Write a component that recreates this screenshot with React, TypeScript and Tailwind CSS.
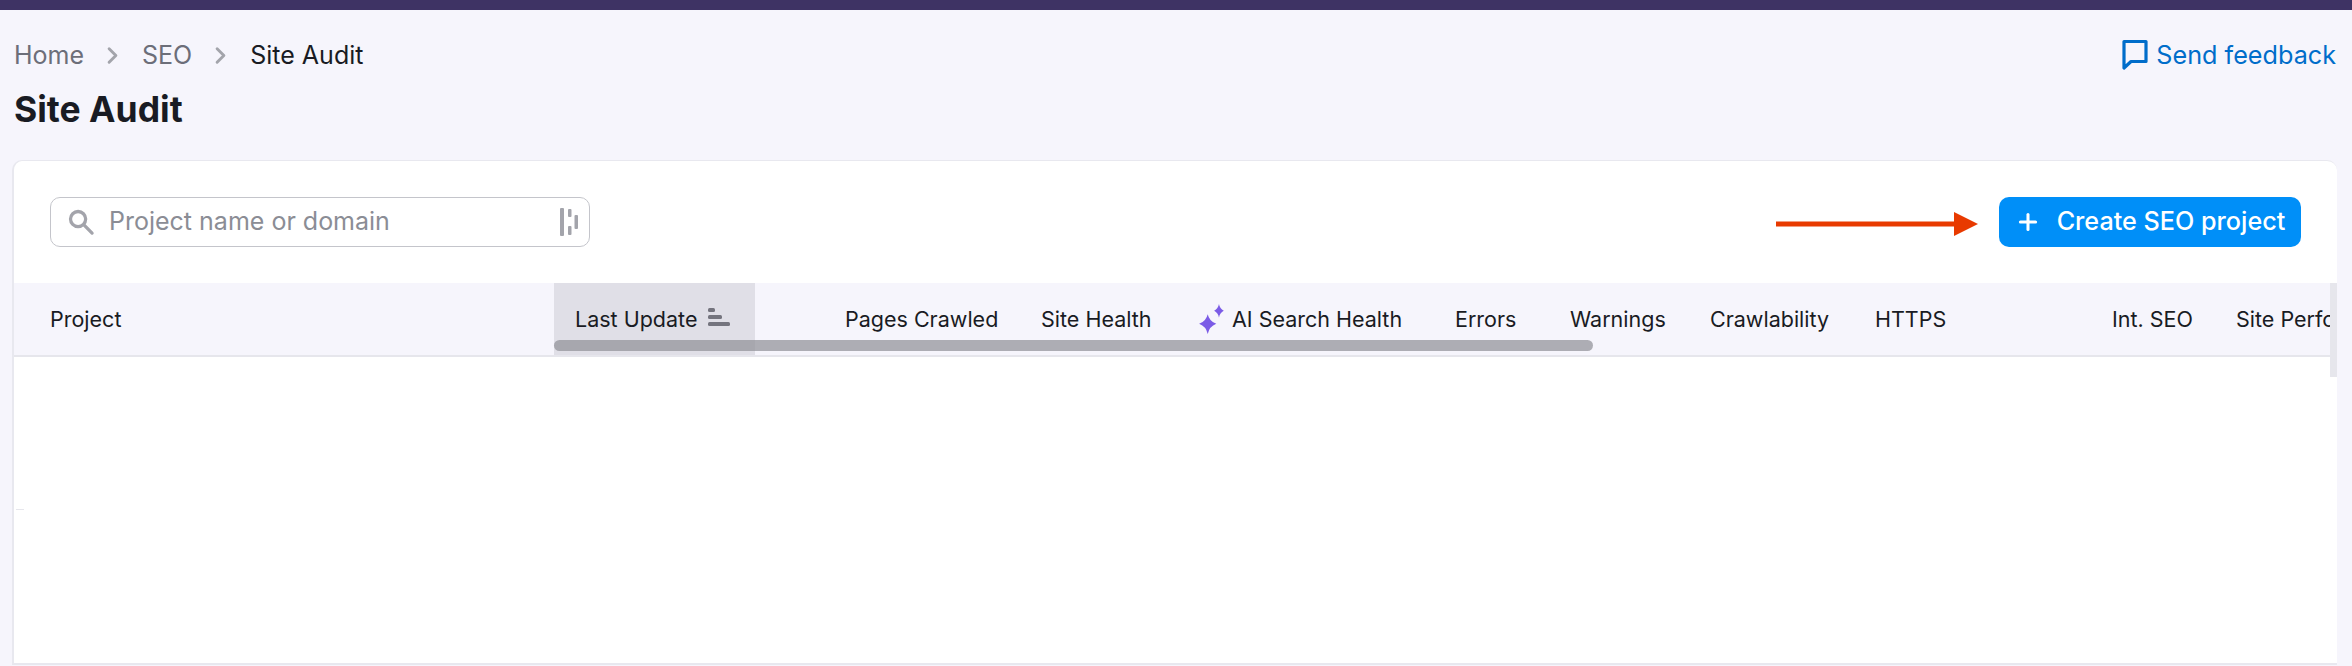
import React from 'react';
import { ChevronRight, Plus } from 'lucide-react';

const columns = [
  { label: 'Pages Crawled', width: 'w-[196px]' },
  { label: 'Site Health', width: 'w-[156px]' },
  { label: 'AI Search Health', width: 'w-[258px]', sparkle: true },
  { label: 'Errors', width: 'w-[115px]' },
  { label: 'Warnings', width: 'w-[140px]' },
  { label: 'Crawlability', width: 'w-[165px]' },
  { label: 'HTTPS', width: 'w-[237px]' },
  { label: 'Int. SEO', width: 'w-[124px]' },
  { label: 'Site Performance', width: 'w-[200px]' },
];

const SearchIcon = () => (
  <svg width="28" height="28" viewBox="0 0 24 24" fill="none" stroke="#a3a4ab" strokeWidth="2.8" className="shrink-0">
    <circle cx="9.5" cy="9.5" r="6.5" />
    <path d="M14.500 14.500l7 7" strokeLinecap="round" />
  </svg>
);

const ColumnsIcon = () => (
  <svg width="20" height="30" viewBox="0 0 20 30" fill="#a3a4ab" className="shrink-0">
    <rect x="1" y="1" width="4" height="28" rx="1" />
    <rect x="9" y="2" width="3.5" height="8" rx="1" />
    <rect x="9" y="19" width="3.5" height="9" rx="1" />
    <rect x="15.500" y="8" width="3.5" height="14" rx="1" />
  </svg>
);

const FeedbackIcon = () => (
  <svg width="26" height="32" viewBox="0 0 26 32" fill="none" stroke="#006dca" strokeWidth="3.2" className="shrink-0">
    <path d="M2 2.500h22v20H9l-7 6.500z" strokeLinejoin="round" />
  </svg>
);

const SortIcon = () => (
  <svg width="22" height="18" viewBox="0 0 22 18" fill="#74747e" className="-mt-[5px] shrink-0">
    <rect x="0" y="0" width="7" height="4" rx="1.500" />
    <rect x="0" y="7" width="14" height="4" rx="1.500" />
    <rect x="0" y="14" width="22" height="4" rx="1.500" />
  </svg>
);

const SparkleIcon = () => (
  <svg width="30" height="30" viewBox="0 0 28 28" fill="#7b5be6" className="shrink-0">
    <path d="M10 9.500Q11.500 16 18 18.500 11.500 21 10 28 8.500 21 2 18.500 8.500 16 10 9.500z" />
    <path d="M20.500 0Q21.300 4.500 25 6.200 21.300 8 20.500 12.500 19.700 8 16 6.200 19.700 4.500 20.500 0z" />
  </svg>
);

const App: React.FC = () => {
  return (
    <div className="h-[666px] w-full overflow-hidden bg-[#f6f5fc] font-['Inter',sans-serif] text-[#191b23]">
      <div className="h-[10px] bg-[#3e3364]" />

      {/* Breadcrumbs + feedback */}
      <div className="flex h-[62px] items-center justify-between pl-[14px] pr-[16px] pt-[28px]">
        <div className="flex items-center text-[25px] leading-[34px] text-[#6c6e79]">
          <span>Home</span>
          <ChevronRight className="ml-[15px] mr-[16px] text-[#a3a4ab]" size={27} strokeWidth={2.6} />
          <span>SEO</span>
          <ChevronRight className="ml-[15px] mr-[16px] text-[#a3a4ab]" size={27} strokeWidth={2.6} />
          <span className="text-[#191b23]">Site Audit</span>
        </div>
        <div className="flex items-center gap-[8px] text-[25.2px] leading-[34px] text-[#006dca]">
          <FeedbackIcon />
          <span>Send feedback</span>
        </div>
      </div>

      <h1 className="pl-[14px] pt-[14px] text-[35.5px] font-bold leading-[48px]">Site Audit</h1>

      {/* Card */}
      <div className="relative ml-[12px] mr-[15px] mt-[26px] h-[505px] overflow-hidden rounded-t-[10px] border-b-2 border-l-2 border-t border-[#e8e8ef] bg-white">
        <div className="flex h-[122px] items-start justify-between pl-[36px] pr-[36px] pt-[36px]">
          <div className="flex h-[50px] w-[540px] items-center gap-[14px] rounded-[10px] border border-[#c4c5cb] bg-white pl-[16px] pr-[10px]">
            <SearchIcon />
            <input
              placeholder="Project name or domain"
              className="min-w-0 flex-1 bg-transparent text-[25px] outline-none placeholder:text-[#8b8d95]"
            />
            <ColumnsIcon />
          </div>
          <div className="flex items-center gap-[21px]">
            <svg width="202" height="26" viewBox="0 0 202 26" className="mt-[3px] shrink-0">
              <rect x="0" y="10.500" width="180" height="5" fill="#e83a00" />
              <path d="M178 1l24 12-24 12z" fill="#e83a00" />
            </svg>
            <button className="flex h-[50px] w-[302px] items-center justify-center gap-[16px] rounded-[10px] bg-[#008ff8] text-[25.2px] font-medium text-white">
              <Plus size={26} strokeWidth={2.8} />
              <span>Create SEO project</span>
            </button>
          </div>
        </div>

        {/* Table header */}
        <div className="flex h-[74px] items-center overflow-hidden whitespace-nowrap border-b-2 border-[#e6e6ec] bg-[#f6f5fc] text-[21.5px]">
          <div className="w-[540px] shrink-0 pl-[36px]">Project</div>
          <div className="flex h-full w-[201px] shrink-0 items-center gap-[11px] bg-[#e0dfe7] pl-[21px]">
            <span>Last Update</span>
            <SortIcon />
          </div>
          <div className="w-[90px] shrink-0" />
          {columns.map(col => (
            <div key={col.label} className={`flex shrink-0 items-center gap-[5px] ${col.width}`}>
              {col.sparkle && <SparkleIcon />}
              <span>{col.label}</span>
            </div>
          ))}
        </div>

        {/* Scrollbars over the table */}
        <div className="absolute left-[540px] top-[179px] h-[11px] w-[1039px] rounded-full bg-[#8f8f96]/70" />
        <div className="absolute right-0 top-[122px] h-[94px] w-[7px] bg-[#e6e6ec]" />
        <div className="absolute left-[2px] top-[348px] h-px w-[8px] bg-[#e6e6ec]" />
      </div>
    </div>
  );
};

export default App;
